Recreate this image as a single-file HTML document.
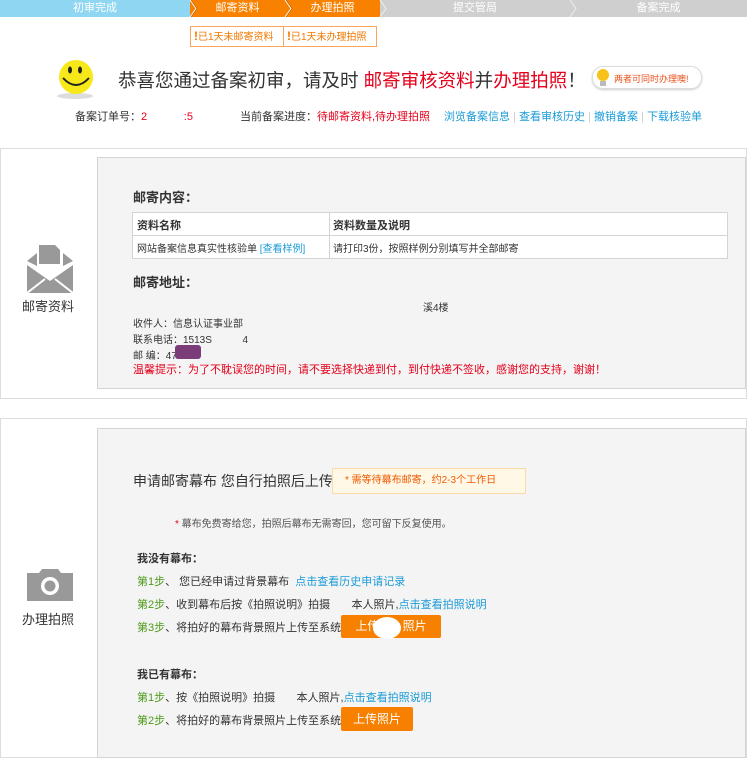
<!DOCTYPE html>
<html><head><meta charset="utf-8"><style>
*{margin:0;padding:0;box-sizing:border-box}
body{width:747px;height:747px;overflow:hidden;background:#fff;font-family:"Liberation Sans","Noto Sans CJK SC",sans-serif;font-size:11px;color:#333;position:relative}
.a{position:absolute;white-space:nowrap}
.step{position:absolute;top:0;height:17px;line-height:17px;text-align:center;color:#fff;font-size:11px}
.blue{color:#1a9bd7}.red{color:#e4001b}.green{color:#4c9a1a}
.btn{position:absolute;background:#f78000;color:#fff;font-size:12px;text-align:center;border-radius:2px}
</style></head><body>
<div class="step" style="left:0;width:190px;background:#8ed6f2">初审完成</div>
<div class="step" style="left:190px;width:190px;background:#f98100"></div>
<div class="step" style="left:380px;width:367px;background:#cfcfcf"></div>
<div class="step" style="left:190px;width:95px">邮寄资料</div>
<div class="step" style="left:285px;width:95px">办理拍照</div>
<div class="step" style="left:380px;width:190px">提交管局</div>
<div class="step" style="left:570px;width:177px">备案完成</div>
<svg class="a" style="left:0;top:0" width="747" height="17"><g fill="none" stroke="#fff" stroke-width="1"><path d="M190 0l6 8.5-6 8.5M285 0l6 8.5-6 8.5"/></g><g fill="none" stroke="#b35a00" stroke-width="0.6"><path d="M191 0l6 8.5-6 8.5M286 0l6 8.5-6 8.5"/></g><g fill="none" stroke="#eee" stroke-width="1"><path d="M380 0l6 8.5-6 8.5M570 0l6 8.5-6 8.5"/></g></svg>
<div class="a" style="left:190px;top:26px;width:94px;height:21px;border:1px solid #f9a55b;color:#f07800;font-size:10px;line-height:19px;padding-left:3px"><b style="color:#f07800;font-size:12px">!</b>已1天未邮寄资料</div>
<div class="a" style="left:283px;top:26px;width:94px;height:21px;border:1px solid #f9a55b;color:#f07800;font-size:10px;line-height:19px;padding-left:3px"><b style="color:#f07800;font-size:12px">!</b>已1天未办理拍照</div>
<svg class="a" style="left:52px;top:58px" width="46" height="42"><ellipse cx="23" cy="38" rx="18" ry="3" fill="#ddd"/><circle cx="24" cy="19" r="17" fill="#f7e81a"/><ellipse cx="18" cy="12" rx="2" ry="3.5" fill="#222"/><ellipse cx="28" cy="12" rx="2" ry="3.5" fill="#222"/><path d="M11 20q13 14 26 0" fill="none" stroke="#222" stroke-width="2"/></svg>
<div class="a" style="left:118px;top:67px;font-size:18.5px;color:#333">恭喜您通过备案初审，请及时 <span class="red">邮寄审核资料</span>并<span class="red">办理拍照</span>！</div>
<div class="a" style="left:592px;top:66px;width:110px;height:23px;border:1px solid #ddd;border-radius:11px;background:#fff;box-shadow:0 1px 2px #ccc"></div>
<svg class="a" style="left:596px;top:68px" width="14" height="20"><circle cx="7" cy="7" r="6" fill="#f7c21a"/><rect x="4" y="13" width="6" height="5" fill="#bbb"/></svg>
<div class="a" style="left:614px;top:72px;font-size:9px;color:#e8501b">两者可同时办理噢!</div>
<div class="a" style="left:75px;top:108px">备案订单号：<span class="red">2&nbsp;&nbsp;&nbsp;&nbsp;&nbsp;&nbsp;&nbsp;&nbsp;&nbsp;&nbsp;&nbsp;&nbsp;:5</span></div>
<div class="a" style="left:240px;top:108px">当前备案进度：<span class="red">待邮寄资料,待办理拍照</span></div>
<div class="a blue" style="left:444px;top:108px">浏览备案信息<span style="color:#ccc"> | </span>查看审核历史<span style="color:#ccc"> | </span>撤销备案<span style="color:#ccc"> | </span>下载核验单</div>

<div class="a" style="left:0;top:148px;width:747px;height:251px;border:1px solid #ddd"></div>
<div class="a" style="left:97px;top:157px;width:649px;height:232px;background:#f4f4f4;border:1px solid #d4d4d4"></div>
<svg class="a" style="left:27px;top:245px" width="46" height="48"><path d="M12 0h16l5 5v14H12z" fill="#999"/><path d="M0 16l10-8v13z" fill="#999"/><path d="M46 16l-10-8v13z" fill="#999"/><path d="M0 20l23 16 23-16v28H0z" fill="#999"/><path d="M0 48l18-14M46 48l-18-14" stroke="#fff" stroke-width="2"/></svg>
<div class="a" style="left:22px;top:296px;font-size:13px">邮寄资料</div>
<div class="a" style="left:133px;top:187px;font-size:13px;font-weight:bold">邮寄内容：</div>
<div class="a" style="left:132px;top:212px;width:596px;height:47px;background:#fff;border:1px solid #d4d4d4"></div>
<div class="a" style="left:132px;top:235px;width:596px;height:1px;background:#d4d4d4"></div>
<div class="a" style="left:329px;top:212px;width:1px;height:47px;background:#d4d4d4"></div>
<div class="a" style="left:137px;top:217px;font-weight:bold">资料名称</div>
<div class="a" style="left:333px;top:217px;font-weight:bold">资料数量及说明</div>
<div class="a" style="left:137px;top:240px;font-size:10px">网站备案信息真实性核验单 <span class="blue">[查看样例]</span></div>
<div class="a" style="left:333px;top:240px;font-size:10px">请打印3份，按照样例分别填写并全部邮寄</div>
<div class="a" style="left:133px;top:272px;font-size:13px;font-weight:bold">邮寄地址：</div>
<div class="a" style="left:423px;top:299px;font-size:10px">溪4楼</div>
<div class="a" style="left:133px;top:315px;font-size:10px">收件人：信息认证事业部</div>
<div class="a" style="left:133px;top:331px;font-size:10px">联系电话：1513S&nbsp;&nbsp;&nbsp;&nbsp;&nbsp;&nbsp;&nbsp;&nbsp;&nbsp;&nbsp;&nbsp;4</div>
<div class="a" style="left:133px;top:347px;font-size:10px">邮 编：47</div>
<div class="a" style="left:175px;top:345px;width:26px;height:14px;background:#7a3d7a;border-radius:3px"></div>
<div class="a red" style="left:133px;top:361px;font-size:11px">温馨提示：为了不耽误您的时间，请不要选择快递到付，到付快递不签收，感谢您的支持，谢谢！</div>

<div class="a" style="left:0;top:418px;width:747px;height:340px;border:1px solid #ddd"></div>
<div class="a" style="left:97px;top:428px;width:649px;height:330px;background:#f4f4f4;border:1px solid #d4d4d4"></div>
<svg class="a" style="left:27px;top:569px" width="46" height="32"><path d="M0 4h12l3-4h16l3 4h12v28H0z" fill="#999"/><circle cx="23" cy="17" r="9" fill="#fff"/><circle cx="23" cy="17" r="5.5" fill="#999"/></svg>
<div class="a" style="left:22px;top:609px;font-size:13px">办理拍照</div>
<div class="a" style="left:133px;top:471px;font-size:14px">申请邮寄幕布 您自行拍照后上传</div>
<div class="a" style="left:332px;top:468px;width:194px;height:26px;background:#fff8e6;border:1px solid #fbd9a6;border-radius:2px;color:#f05a00;font-size:10px;line-height:24px;padding-left:12px">* 需等待幕布邮寄，约2-3个工作日</div>
<div class="a" style="left:175px;top:515px;font-size:10px;color:#555"><span class="red">*</span> 幕布免费寄给您，拍照后幕布无需寄回，您可留下反复使用。</div>
<div class="a" style="left:137px;top:550px;font-weight:bold">我没有幕布：</div>
<div class="a" style="left:137px;top:573px"><span class="green">第1步</span>、 您已经申请过背景幕布 <span class="blue">&nbsp;点击查看历史申请记录</span></div>
<div class="a" style="left:137px;top:596px"><span class="green">第2步</span>、收到幕布后按《拍照说明》拍摄&nbsp;&nbsp;&nbsp;&nbsp;&nbsp;&nbsp;&nbsp;本人照片,<span class="blue">点击查看拍照说明</span></div>
<div class="a" style="left:137px;top:619px"><span class="green">第3步</span>、将拍好的幕布背景照片上传至系统</div>
<div class="btn" style="left:341px;top:615px;width:100px;height:23px;line-height:23px">上传&nbsp;&nbsp;&nbsp;&nbsp;&nbsp;&nbsp;&nbsp;照片</div>
<div class="a" style="left:373px;top:617px;width:28px;height:22px;background:#fff;border-radius:50%"></div>
<div class="a" style="left:137px;top:666px;font-weight:bold">我已有幕布：</div>
<div class="a" style="left:137px;top:689px"><span class="green">第1步</span>、按《拍照说明》拍摄&nbsp;&nbsp;&nbsp;&nbsp;&nbsp;&nbsp;&nbsp;本人照片,<span class="blue">点击查看拍照说明</span></div>
<div class="a" style="left:137px;top:712px"><span class="green">第2步</span>、将拍好的幕布背景照片上传至系统</div>
<div class="btn" style="left:341px;top:707px;width:72px;height:24px;line-height:24px">上传照片</div>
</body></html>
